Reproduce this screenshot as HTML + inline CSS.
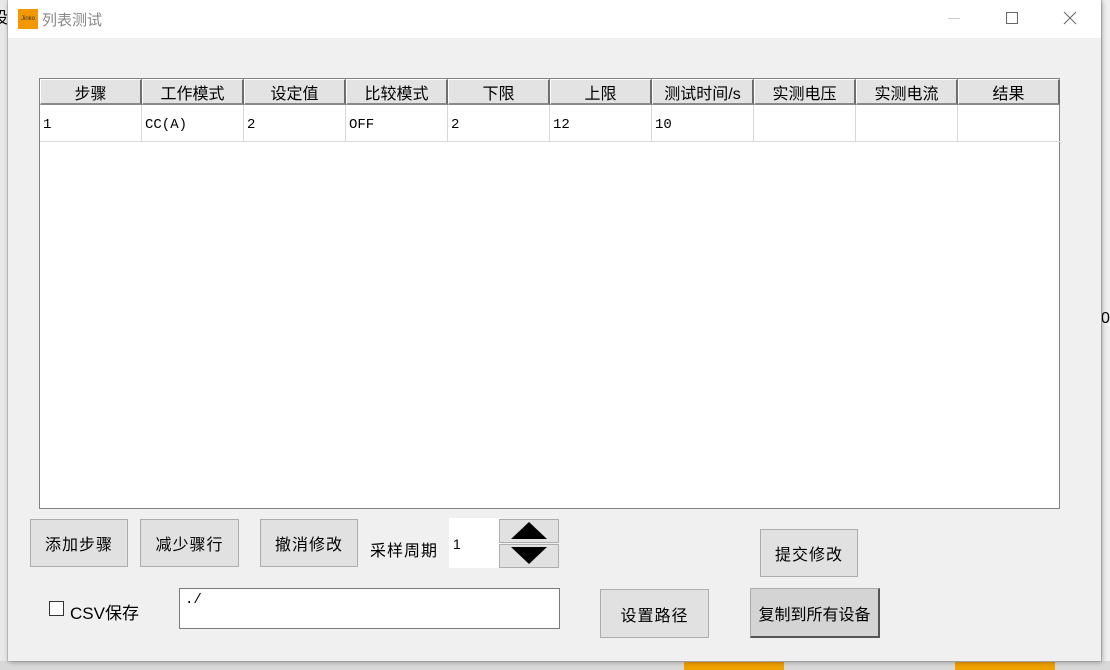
<!DOCTYPE html>
<html><head><meta charset="utf-8"><style>
*{box-sizing:border-box;margin:0;padding:0}
body{width:1110px;height:670px;position:relative;overflow:hidden;background:#f0f0f0;font-family:"Liberation Sans","Noto Sans CJK SC",sans-serif}
.a{position:absolute}
.win{left:8px;top:0;width:1093px;height:661px;background:#f0f0f0;box-shadow:1px 1px 5px rgba(0,0,0,.35),0 0 0 1px #c8c8c8}
.title{left:0;top:0;width:100%;height:38px;background:#fff}
.btn{position:absolute;background:#e1e1e1;border:1px solid #adadad;font-size:16px;color:#000;display:flex;align-items:center;justify-content:center;font-family:"Liberation Sans","Noto Sans CJK SC",sans-serif;letter-spacing:1px}
.th{position:absolute;top:0;height:26px;background:#e3e3e3;border-right:2px solid #6e6e6e;border-bottom:2px solid #8a8a8a;border-left:1px solid #fff;border-top:1px solid #fff;font-size:16px;display:flex;align-items:center;justify-content:center}
.td{position:absolute;top:26px;height:37px;border-right:1px solid #d8d8d8;border-bottom:1px solid #d8d8d8;font-size:14px;padding:3px 0 0 3px;display:flex;align-items:center;font-family:"Liberation Mono","Noto Sans CJK SC",monospace}
</style></head><body>
<div class="a" style="left:0;top:0;width:8px;height:670px;background:#e8e8e8"></div>
<div class="a" style="left:-8px;top:4px;font-size:16px">设</div>
<div class="a" style="left:1101px;top:310px;font-size:16px">0</div>
<div class="a" style="left:0;top:661px;width:1110px;height:9px;background:#d9d9d9"></div>
<div class="a" style="left:684px;top:661px;width:100px;height:9px;background:#f0a000"></div>
<div class="a" style="left:955px;top:661px;width:100px;height:9px;background:#f0a000"></div>
<div class="a win">
 <div class="a title"></div>
 <div class="a" style="left:10px;top:9px;width:20px;height:20px;background:#f39800;font-size:6px;color:#333;display:flex;align-items:center;justify-content:center">Jinko</div>
 <div class="a" style="left:34px;top:9px;font-size:15px;color:#888">列表测试</div>
 <div class="a" style="left:940px;top:18px;width:12px;height:1px;background:#ccc"></div>
 <div class="a" style="left:998px;top:12px;width:12px;height:12px;border:1px solid #666"></div>
 <svg class="a" style="left:1055px;top:11px" width="14" height="14"><path d="M1 1L13 13M13 1L1 13" stroke="#666" stroke-width="1"/></svg>
 <div class="a" style="left:31px;top:78px;width:1021px;height:431px;background:#fff;border:1px solid #828282">
  <div class="th" style="left:0;width:102px">步骤</div>
  <div class="th" style="left:102px;width:102px">工作模式</div>
  <div class="th" style="left:204px;width:102px">设定值</div>
  <div class="th" style="left:306px;width:102px">比较模式</div>
  <div class="th" style="left:408px;width:102px">下限</div>
  <div class="th" style="left:510px;width:102px">上限</div>
  <div class="th" style="left:612px;width:102px">测试时间/s</div>
  <div class="th" style="left:714px;width:102px">实测电压</div>
  <div class="th" style="left:816px;width:102px">实测电流</div>
  <div class="th" style="left:918px;width:102px">结果</div>
  <div class="td" style="left:0;width:102px">1</div>
  <div class="td" style="left:102px;width:102px">CC(A)</div>
  <div class="td" style="left:204px;width:102px">2</div>
  <div class="td" style="left:306px;width:102px">OFF</div>
  <div class="td" style="left:408px;width:102px">2</div>
  <div class="td" style="left:510px;width:102px">12</div>
  <div class="td" style="left:612px;width:102px">10</div>
  <div class="td" style="left:714px;width:102px"></div>
  <div class="td" style="left:816px;width:102px"></div>
  <div class="td" style="left:918px;width:102px;border-right:none"></div>
 </div>
 <div class="btn" style="left:22px;top:519px;width:98px;height:48px">添加步骤</div>
 <div class="btn" style="left:132px;top:519px;width:99px;height:48px">减少骤行</div>
 <div class="btn" style="left:252px;top:519px;width:98px;height:48px">撤消修改</div>
 <div class="a" style="left:362px;top:537px;font-size:16px;letter-spacing:1px">采样周期</div>
 <div class="a" style="left:441px;top:518px;width:52px;height:50px;background:#fff;font-size:14px;padding:18px 0 0 4px">1</div>
 <div class="a" style="left:491px;top:519px;width:60px;height:24px;background:#e1e1e1;border:1px solid #adadad"><svg width="58" height="22"><polygon points="29,2 47,19 11,19" fill="#000"/></svg></div>
 <div class="a" style="left:491px;top:544px;width:60px;height:24px;background:#e1e1e1;border:1px solid #adadad"><svg width="58" height="22"><polygon points="11,2 47,2 29,19" fill="#000"/></svg></div>
 <div class="btn" style="left:752px;top:529px;width:98px;height:48px">提交修改</div>
 <div class="a" style="left:41px;top:601px;width:15px;height:15px;border:1px solid #333;background:#fff"></div>
 <div class="a" style="left:62px;top:599px;font-size:17px">CSV保存</div>
 <div class="a" style="left:171px;top:588px;width:381px;height:41px;background:#fff;border:1px solid #7a7a7a;font-size:14px;padding:3px 0 0 5px;font-family:'Liberation Mono',monospace">./</div>
 <div class="btn" style="left:592px;top:589px;width:109px;height:49px">设置路径</div>
 <div class="btn" style="left:742px;top:588px;width:130px;height:50px;background:#d4d4d4;border-right:2px solid #555;border-bottom:2px solid #555;letter-spacing:0">复制到所有设备</div>
</div>
</body></html>
